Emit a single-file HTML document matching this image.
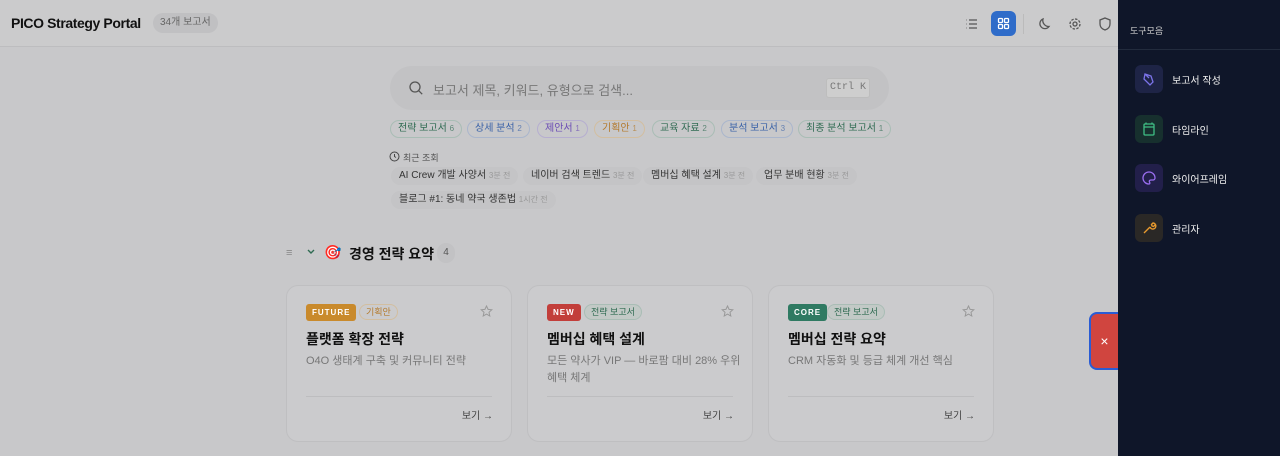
<!DOCTYPE html>
<html><head><meta charset="utf-8"><style>
*{box-sizing:border-box;margin:0;padding:0}
body{width:1280px;height:456px;overflow:hidden;background:#c8c8ca;font-family:"Liberation Sans","Noto Sans CJK KR",sans-serif;position:relative;color:#111}
.hdr{position:absolute;left:0;top:0;width:1118px;height:47px;background:#cbcbcc;border-bottom:1px solid #bdbdbf}
.title{position:absolute;left:11px;top:15px;font-size:14px;font-weight:bold;letter-spacing:-0.4px}
.cnt{position:absolute;left:153px;top:13px;height:20px;padding:0 7px;border-radius:10px;background:#c0c0c2;font-size:10px;color:#666;line-height:20px}
.ic{position:absolute;top:12px;width:24px;height:24px;color:#555}
.grid{position:absolute;left:991px;top:11px;width:25px;height:25px;border-radius:6px;background:#2f6cc9}
.search{position:absolute;left:390px;top:66px;width:499px;height:44px;border-radius:22px;background:#c2c2c4}
.search span{position:absolute;left:43px;top:14px;font-size:13px;color:#777}
.kbd{position:absolute;left:826px;top:78px;width:44px;height:20px;background:#cecece;border:1px solid #bdbdbd;border-radius:3px;font-family:"Liberation Mono",monospace;font-size:10px;color:#777;text-align:center;line-height:18px}
.chip{position:absolute;top:120px;height:18px;border-radius:9px;border:1px solid;font-size:10px;line-height:16px;padding:0 7px;white-space:nowrap}
.chip i{font-style:normal;font-size:8px;opacity:.7}
.rec{position:absolute;height:18px;border-radius:9px;background:#c4c4c6;font-size:10px;line-height:18px;padding:0 8px;color:#333;white-space:nowrap}
.rec i{font-style:normal;font-size:8px;color:#999}
.card{position:absolute;top:285px;width:226px;height:157px;border-radius:12px;background:#cbcbcd;border:1px solid #bfbfc1}
.badge{position:absolute;left:19px;top:18px;height:17px;border-radius:3px;color:#fff;font-size:8px;font-weight:bold;letter-spacing:1px;line-height:17px;padding:0 6px}
.tag{position:absolute;top:18px;height:16px;border-radius:8px;border:1px solid;font-size:9px;line-height:14px;padding:0 6px}
.ct{position:absolute;left:19px;top:43px;font-size:14px;font-weight:bold}
.cd{position:absolute;left:19px;top:67px;font-size:11px;color:#777;line-height:17px;width:200px}
.hr{position:absolute;left:19px;right:19px;top:110px;border-top:1px solid #bdbdbf}
.view{position:absolute;right:18px;top:121px;font-size:10px;color:#444}
.star{position:absolute;right:18px;top:19px}
.side{position:absolute;left:1118px;top:0;width:162px;height:456px;background:#0f1629}
.side .h{position:absolute;left:12px;top:24px;font-size:9px;color:#ccc}
.side .line{position:absolute;left:0;right:0;top:49px;border-top:1px solid #222b3d}
.it{position:absolute;left:17px;width:28px;height:28px;border-radius:6px}
.itt{position:absolute;left:54px;font-size:10px;color:#f0f0f0}
.close{position:absolute;left:1089px;top:312px;width:31px;height:58px;background:#d0453f;border:2px solid #2a5cd4;border-radius:8px 0 0 8px;color:#fff;font-size:14px;text-align:center;line-height:54px}
</style></head><body>
<div class="hdr">
<div class="title">PICO Strategy Portal</div>
<div class="cnt">34개 보고서</div>
<svg class="ic" style="left:960px" viewBox="0 0 24 24" fill="none" stroke="#555" stroke-width="1.3"><path d="M9 8h8M9 12h8M9 16h8M6 8h.5M6 12h.5M6 16h.5"/></svg>
<div class="grid"><svg width="25" height="25" viewBox="0 0 25 25" fill="none" stroke="#fff" stroke-width="1.3"><rect x="7.5" y="7.5" width="4" height="4" rx="1"/><rect x="13.5" y="7.5" width="4" height="4" rx="1"/><rect x="7.5" y="13.5" width="4" height="4" rx="1"/><rect x="13.5" y="13.5" width="4" height="4" rx="1"/></svg></div>
<div style="position:absolute;left:1023px;top:14px;height:20px;border-left:1px solid #bbb"></div>
<svg class="ic" style="left:1033px" viewBox="0 0 24 24" fill="none" stroke="#555" stroke-width="1.3"><path d="M16 14.5A6 6 0 0 1 10 7a5 5 0 1 0 6 7.5z"/></svg>
<svg class="ic" style="left:1063px" viewBox="0 0 24 24" fill="none" stroke="#555" stroke-width="1.3"><circle cx="12" cy="12" r="2"/><circle cx="12" cy="12" r="5" stroke-dasharray="2.5 1.4"/></svg>
<svg class="ic" style="left:1093px" viewBox="0 0 24 24" fill="none" stroke="#555" stroke-width="1.3"><path d="M12 6l5 2v4c0 3-2 5-5 6-3-1-5-3-5-6V8z"/></svg>
</div>
<div class="search"><svg style="position:absolute;left:18px;top:14px" width="16" height="16" viewBox="0 0 16 16" fill="none" stroke="#555" stroke-width="1.3"><circle cx="7" cy="7" r="5"/><path d="M10.7 10.7l3.5 3.5"/></svg><span>보고서 제목, 키워드, 유형으로 검색...</span></div>
<div class="kbd">Ctrl K</div>
<div class="chip" style="left:390px;color:#2f6b52;border-color:#a9bdb5">전략 보고서 <i>6</i></div>
<div class="chip" style="left:467px;color:#3a62a8;border-color:#aab6cc">상세 분석 <i>2</i></div>
<div class="chip" style="left:537px;color:#6a4bb5;border-color:#b6aed0">제안서 <i>1</i></div>
<div class="chip" style="left:594px;color:#b47a2c;border-color:#d2bea0">기획안 <i>1</i></div>
<div class="chip" style="left:652px;color:#2f6b52;border-color:#a9bdb5">교육 자료 <i>2</i></div>
<div class="chip" style="left:721px;color:#3a62a8;border-color:#aab6cc">분석 보고서 <i>3</i></div>
<div class="chip" style="left:798px;color:#2f6b52;border-color:#a9bdb5">최종 분석 보고서 <i>1</i></div>
<svg style="position:absolute;left:389px;top:151px" width="11" height="11" viewBox="0 0 11 11" fill="none" stroke="#444" stroke-width="1"><circle cx="5.5" cy="5.5" r="4.5"/><path d="M5.5 3v2.5l1.5 1"/></svg>
<div style="position:absolute;left:403px;top:151px;font-size:9px;color:#555">최근 조회</div>
<div class="rec" style="left:391px;top:167px">AI Crew 개발 사양서 <i>3분 전</i></div>
<div class="rec" style="left:523px;top:167px">네이버 검색 트렌드 <i>3분 전</i></div>
<div class="rec" style="left:643px;top:167px">멤버십 혜택 설계 <i>3분 전</i></div>
<div class="rec" style="left:756px;top:167px">업무 분배 현황 <i>3분 전</i></div>
<div class="rec" style="left:391px;top:191px">블로그 #1: 동네 약국 생존법 <i>1시간 전</i></div>
<div style="position:absolute;left:286px;top:247px;font-size:11px;color:#888">≡</div>
<svg style="position:absolute;left:306px;top:248px" width="10" height="8" viewBox="0 0 10 8" fill="none" stroke="#2f6b52" stroke-width="1.4"><path d="M2 2l3 3 3-3"/></svg>
<div style="position:absolute;left:324px;top:244px;font-size:14px">🎯</div>
<div style="position:absolute;left:349px;top:244px;font-size:14px;font-weight:bold">경영 전략 요약</div>
<div style="position:absolute;left:437px;top:243px;width:18px;height:20px;border-radius:9px;background:#c2c2c4;font-size:10px;color:#555;text-align:center;line-height:20px">4</div>
<div class="card" style="left:286px"><div class="badge" style="background:#c98a2c">FUTURE</div><div class="tag" style="left:72px;color:#b47a2c;border-color:#d2bea0">기획안</div><svg class="star" width="13" height="13" viewBox="0 0 13 13" fill="none" stroke="#999" stroke-width="1"><path d="M6.5 1l1.6 3.4 3.7.4-2.8 2.5.8 3.7-3.3-1.9-3.3 1.9.8-3.7L1.2 4.8l3.7-.4z"/></svg><div class="ct">플랫폼 확장 전략</div><div class="cd">O4O 생태계 구축 및 커뮤니티 전략</div><div class="hr"></div><div class="view">보기 →</div></div>
<div class="card" style="left:527px"><div class="badge" style="background:#c23e3a">NEW</div><div class="tag" style="left:56px;color:#2f6b52;border-color:#a9bdb5;background:#c2c9c6">전략 보고서</div><svg class="star" width="13" height="13" viewBox="0 0 13 13" fill="none" stroke="#999" stroke-width="1"><path d="M6.5 1l1.6 3.4 3.7.4-2.8 2.5.8 3.7-3.3-1.9-3.3 1.9.8-3.7L1.2 4.8l3.7-.4z"/></svg><div class="ct">멤버십 혜택 설계</div><div class="cd">모든 약사가 VIP — 바로팜 대비 28% 우위 혜택 체계</div><div class="hr"></div><div class="view">보기 →</div></div>
<div class="card" style="left:768px"><div class="badge" style="background:#2f7a62">CORE</div><div class="tag" style="left:58px;color:#2f6b52;border-color:#a9bdb5;background:#c2c9c6">전략 보고서</div><svg class="star" width="13" height="13" viewBox="0 0 13 13" fill="none" stroke="#999" stroke-width="1"><path d="M6.5 1l1.6 3.4 3.7.4-2.8 2.5.8 3.7-3.3-1.9-3.3 1.9.8-3.7L1.2 4.8l3.7-.4z"/></svg><div class="ct">멤버십 전략 요약</div><div class="cd">CRM 자동화 및 등급 체계 개선 핵심</div><div class="hr"></div><div class="view">보기 →</div></div>
<div class="close">×</div>
<div class="side">
<div class="h">도구모음</div><div class="line"></div>
<div class="it" style="top:65px;background:#1e2446"><svg width="28" height="28" viewBox="0 0 28 28" fill="none" stroke="#7b73e8" stroke-width="1.3"><path d="M10 9l6 2 2 6-3 3-6-6zM10 9l4 4"/></svg></div><div class="itt" style="top:72px">보고서 작성</div>
<div class="it" style="top:115px;background:#17302e"><svg width="28" height="28" viewBox="0 0 28 28" fill="none" stroke="#3fbf85" stroke-width="1.3"><rect x="9" y="9" width="10" height="11" rx="1"/><path d="M9 12h10M11 7.5v2M17 7.5v2"/></svg></div><div class="itt" style="top:122px">타임라인</div>
<div class="it" style="top:164px;background:#221f4a"><svg width="28" height="28" viewBox="0 0 28 28" fill="none" stroke="#9a6ef0" stroke-width="1.3"><path d="M14 8a6 6 0 1 0 0 12c1 0 1-1 .5-2s0-2 1.5-2h2a2 2 0 0 0 2-2 6 6 0 0 0-6-6z"/></svg></div><div class="itt" style="top:171px">와이어프레임</div>
<div class="it" style="top:214px;background:#2a2826"><svg width="28" height="28" viewBox="0 0 28 28" fill="none" stroke="#e89a2e" stroke-width="1.4"><path d="M9 19l6-6M15 13a3 3 0 1 0 3-4l-1.5 1.5.5 1.5 1.5.5L20 11"/></svg></div><div class="itt" style="top:221px">관리자</div>
</div>
</body></html>
